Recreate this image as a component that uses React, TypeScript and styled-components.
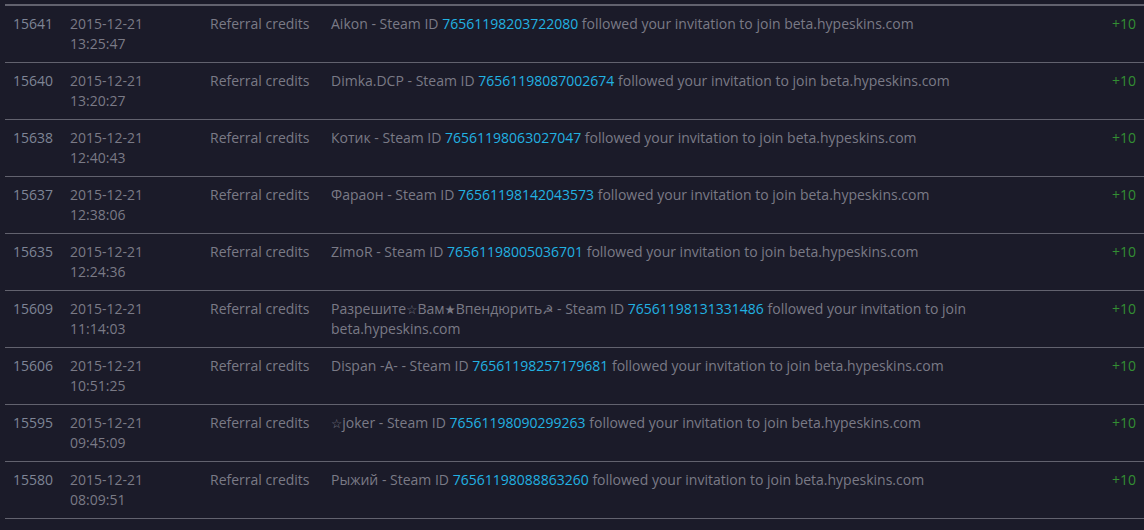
import React from "react";
import styled, { createGlobalStyle } from "styled-components";

const Global = createGlobalStyle`
  html, body { margin: 0; padding: 0; background: #1b1b29; }
  body { font-family: "Open Sans", "DejaVu Sans", sans-serif; font-size: 14px; }
`;

const Page = styled.div`
  padding: 4px 0 0 5px;
  height: 530px;
  box-sizing: border-box;
  overflow: hidden;
`;

const Table = styled.div`
  border-top: 2px solid #62626e;
  display: grid;
  grid-template-columns: 57px 140px 121px 680px 1fr;
`;

const Row = styled.div`
  display: contents;
`;

const Cell = styled.div<{ $right?: boolean }>`
  padding: 8px;
  line-height: 20px;
  color: #7a7a86;
  border-bottom: 1px solid #62626e;
  text-align: ${(p) => (p.$right ? "right" : "left")};
  min-height: 40px;
`;

const Amount = styled.span`
  color: #338f33;
`;

const SteamId = styled.span`
  color: #22b2e2;
`;

const Id = styled.span`
  color: #7e8596;
`;

const Symbol = styled.span`
  font-family: "DejaVu Sans", sans-serif;
  font-size: 12.5px;
  line-height: 0;
`;

type Entry = { id: string; date: string; time: string; name: React.ReactNode; steam: string };

const rows: Entry[] = [
  { id: "15641", date: "2015-12-21", time: "13:25:47", name: "Aikon", steam: "76561198203722080" },
  { id: "15640", date: "2015-12-21", time: "13:20:27", name: "Dimka.DCP", steam: "76561198087002674" },
  { id: "15638", date: "2015-12-21", time: "12:40:43", name: "Котик", steam: "76561198063027047" },
  { id: "15637", date: "2015-12-21", time: "12:38:06", name: "Фараон", steam: "76561198142043573" },
  { id: "15635", date: "2015-12-21", time: "12:24:36", name: "ZimoR", steam: "76561198005036701" },
  {
    id: "15609",
    date: "2015-12-21",
    time: "11:14:03",
    name: (
      <>
        Разрешите<Symbol>☆</Symbol>Вам<Symbol>★</Symbol>Впендюрить<Symbol>☭</Symbol>
      </>
    ),
    steam: "76561198131331486",
  },
  { id: "15606", date: "2015-12-21", time: "10:51:25", name: "Dispan -A-", steam: "76561198257179681" },
  {
    id: "15595",
    date: "2015-12-21",
    time: "09:45:09",
    name: (
      <>
        <Symbol>☆</Symbol>joker
      </>
    ),
    steam: "76561198090299263",
  },
  { id: "15580", date: "2015-12-21", time: "08:09:51", name: "Рыжий", steam: "76561198088863260" },
];

export default function App() {
  return (
    <>
      <Global />
      <Page>
        <Table>
          {rows.map((r) => (
            <Row key={r.id}>
              <Cell><Id>{r.id}</Id></Cell>
              <Cell>
                {r.date}
                <br />
                {r.time}
              </Cell>
              <Cell>Referral credits</Cell>
              <Cell>
                {r.name} - Steam ID <SteamId>{r.steam}</SteamId> followed your invitation to join beta.hypeskins.com
              </Cell>
              <Cell $right>
                <Amount>+10</Amount>
              </Cell>
            </Row>
          ))}
        </Table>
      </Page>
    </>
  );
}
